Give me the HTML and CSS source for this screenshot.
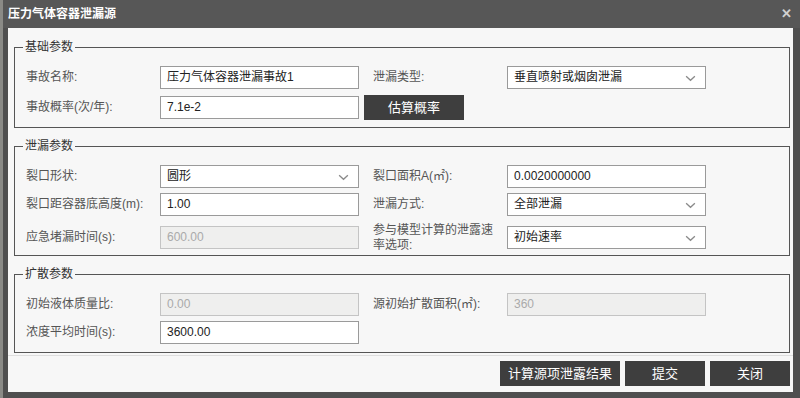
FILE: index.html
```html
<!DOCTYPE html>
<html lang="zh">
<head>
<meta charset="utf-8">
<title>压力气体容器泄漏源</title>
<link rel="stylesheet" href="styles.css">
</head>
<body>
<div class="page">
  <div class="strip"></div>
  <div class="dialog">
    <div class="titlebar">
      <span class="title">压力气体容器泄漏源</span>
      <span class="close">✕</span>
    </div>
    <div class="content">
      <fieldset class="group g1">
        <legend>基础参数</legend>
        <div class="grid">
          <label class="lbl">事故名称:</label>
          <div class="field">压力气体容器泄漏事故1</div>
          <label class="lbl">泄漏类型:</label>
          <div class="field select">垂直喷射或烟囱泄漏<svg class="chev" viewBox="0 0 12 8"><path d="M1 1.5 L6 6 L11 1.5" fill="none" stroke="#8a8a8a" stroke-width="1.5"/></svg></div>
          <label class="lbl">事故概率(次/年):</label>
          <div class="field">7.1e-2</div>
          <div class="btncell"><button class="btn est">估算概率</button></div>
        </div>
      </fieldset>
      <fieldset class="group g2">
        <legend>泄漏参数</legend>
        <div class="grid">
          <label class="lbl">裂口形状:</label>
          <div class="field select">圆形<svg class="chev" viewBox="0 0 12 8"><path d="M1 1.5 L6 6 L11 1.5" fill="none" stroke="#8a8a8a" stroke-width="1.5"/></svg></div>
          <label class="lbl">裂口面积A(㎡):</label>
          <div class="field">0.0020000000</div>
          <label class="lbl">裂口距容器底高度(m):</label>
          <div class="field">1.00</div>
          <label class="lbl">泄漏方式:</label>
          <div class="field select">全部泄漏<svg class="chev" viewBox="0 0 12 8"><path d="M1 1.5 L6 6 L11 1.5" fill="none" stroke="#8a8a8a" stroke-width="1.5"/></svg></div>
          <label class="lbl">应急堵漏时间(s):</label>
          <div class="field disabled">600.00</div>
          <label class="lbl wrap">参与模型计算的泄露速率选项:</label>
          <div class="field select">初始速率<svg class="chev" viewBox="0 0 12 8"><path d="M1 1.5 L6 6 L11 1.5" fill="none" stroke="#8a8a8a" stroke-width="1.5"/></svg></div>
        </div>
      </fieldset>
      <fieldset class="group g3">
        <legend>扩散参数</legend>
        <div class="grid">
          <label class="lbl">初始液体质量比:</label>
          <div class="field disabled">0.00</div>
          <label class="lbl">源初始扩散面积(㎡):</label>
          <div class="field disabled">360</div>
          <label class="lbl">浓度平均时间(s):</label>
          <div class="field">3600.00</div>
        </div>
      </fieldset>
      <div class="footer">
        <button class="btn wide">计算源项泄露结果</button>
        <button class="btn">提交</button>
        <button class="btn">关闭</button>
      </div>
    </div>
  </div>
</div>
</body>
</html>
```

FILE: styles.css
```css
html, body {
  margin: 0;
  padding: 0;
  background: #4e4e4e;
}
body {
  font-family: "Liberation Sans", "Noto Sans CJK SC", sans-serif;
  font-size: 12px;
  color: #555;
}
.page {
  display: flex;
  width: 800px;
  height: 398px;
}
.strip {
  width: 3px;
  background: #8a8a86;
}
.dialog {
  flex: 1;
  display: flex;
  flex-direction: column;
  background: #4f4f4f;
  padding: 0 7px 6px 5px;
}
.titlebar {
  height: 28px;
  display: flex;
  align-items: center;
  justify-content: space-between;
  background: #575757;
  margin: 0 -7px 0 -5px;
  padding: 0 8px 0 5px;
}
.title {
  color: #fff;
  font-weight: bold;
  font-size: 12px;
  line-height: 16px;
}
.close {
  color: #d0d0d0;
  font-weight: bold;
  font-size: 13px;
  line-height: 14px;
}
.content {
  flex: 1;
  background: #f7f7f7;
  padding: 11px 3px 0 6px;
  display: flex;
  flex-direction: column;
}
.group {
  margin: 0;
  border: 1px solid #555;
  padding: 11px 11px 7px 11px;
  min-width: 0;
}
.group legend {
  padding: 0 2px;
  margin-left: -3px;
  line-height: 16px;
  font-size: 12px;
  color: #333;
}
.g1 { margin-bottom: 10px; }
.g2 { margin-bottom: 10px; padding-bottom: 2px; }
.g3 { padding-bottom: 8px; }
.grid {
  display: grid;
  grid-template-columns: 120px 199px 120px 199px;
  column-gap: 14px;
  row-gap: 5px;
  align-items: center;
}
.g1 .grid { row-gap: 6px; }
.lbl {
  line-height: 15px;
  color: #555;
  white-space: nowrap;
}
.lbl.wrap {
  white-space: normal;
  padding-top: 2px;
}
.field {
  position: relative;
  height: 23px;
  box-sizing: border-box;
  border: 1px solid #9a9a9a;
  background: #fff;
  color: #222;
  line-height: 21px;
  padding: 0 6px;
  font-size: 12px;
}
.field.disabled {
  background: #efefee;
  border-color: #c4c4c4;
  color: #aaa;
}
.chev {
  position: absolute;
  right: 9px;
  top: 8px;
  width: 11px;
  height: 7px;
}
.btncell {
  grid-column: 3 / span 2;
  margin-left: -9px;
  display: flex;
}
.btn {
  height: 25px;
  width: 80px;
  border: 0;
  background: #3e3e3e;
  color: #fff;
  font-family: "Liberation Sans", "Noto Sans CJK SC", sans-serif;
  font-size: 13px;
  padding: 0;
  line-height: 25px;
}
.btn.est { width: 100px; }
.btn.wide { width: 120px; }
.footer {
  margin-top: 2px;
  border-top: 1px solid #dedede;
  margin-left: -6px;
  margin-right: -3px;
  padding: 5px 3px 0 0;
  display: flex;
  justify-content: flex-end;
  gap: 5px;
}
```
